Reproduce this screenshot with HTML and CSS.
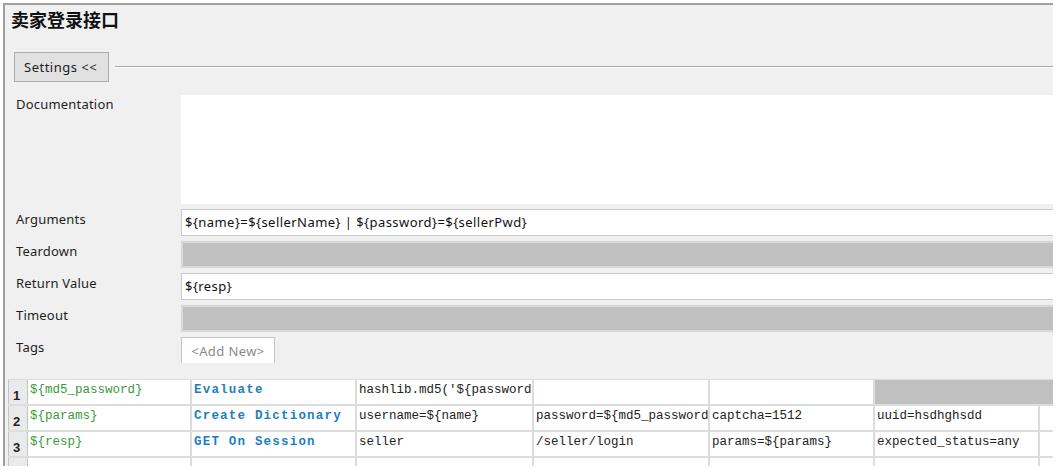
FILE: index.html
```html
<!DOCTYPE html>
<html>
<head>
<meta charset="utf-8">
<link rel="stylesheet" href="styles.css">
</head>
<body>
<div class="panel">
  <div class="title">卖家登录接口</div>
  <div class="settings-row">
    <div class="btn">Settings &lt;&lt;</div>
    <div class="rule"></div>
  </div>
  <div class="form">
    <div class="label">Documentation</div>
    <div class="field doc"></div>
    <div class="label">Arguments</div>
    <div class="field input">${name}=${sellerName} | ${password}=${sellerPwd}</div>
    <div class="label">Teardown</div>
    <div class="field disabled"></div>
    <div class="label">Return Value</div>
    <div class="field input">${resp}</div>
    <div class="label">Timeout</div>
    <div class="field disabled"></div>
    <div class="label">Tags</div>
    <div class="tagcell"><div class="addnew">&lt;Add New&gt;</div></div>
  </div>
  <div class="grid">
    <div class="row">
      <div class="rh">1</div>
      <div class="c c1 var">${md5_password}</div>
      <div class="c c2 kw">Evaluate</div>
      <div class="c c3">hashlib.md5('${password}'.encode()).hexdigest()</div>
      <div class="c c4"></div>
      <div class="c c5"></div>
      <div class="c c6 gray"></div>
      <div class="c c7 gray"></div>
    </div>
    <div class="row">
      <div class="rh">2</div>
      <div class="c c1 var">${params}</div>
      <div class="c c2 kw">Create Dictionary</div>
      <div class="c c3">username=${name}</div>
      <div class="c c4">password=${md5_password}</div>
      <div class="c c5">captcha=1512</div>
      <div class="c c6">uuid=hsdhghsdd</div>
      <div class="c c7"></div>
    </div>
    <div class="row">
      <div class="rh">3</div>
      <div class="c c1 var">${resp}</div>
      <div class="c c2 kw">GET On Session</div>
      <div class="c c3">seller</div>
      <div class="c c4">/seller/login</div>
      <div class="c c5">params=${params}</div>
      <div class="c c6">expected_status=any</div>
      <div class="c c7"></div>
    </div>
    <div class="row">
      <div class="rh">4</div>
      <div class="c c1"></div>
      <div class="c c2"></div>
      <div class="c c3"></div>
      <div class="c c4"></div>
      <div class="c c5"></div>
      <div class="c c6"></div>
      <div class="c c7"></div>
    </div>
  </div>
</div>
</body>
</html>
```
FILE: styles.css
```css
* { box-sizing: border-box; }
html, body { margin: 0; padding: 0; background: #ffffff; }
body { padding: 3px 0 0 3px; }
.panel {
  width: 1050px;
  height: 463px;
  overflow: hidden;
  background: #f0f0f0;
  border-left: 2px solid #a0a0a0;
  border-top: 2px solid #a0a0a0;
  font-family: "Noto Sans", "Open Sans", sans-serif;
  color: #1e1e1e;
}
.title {
  font-family: "Noto Sans CJK SC", sans-serif;
  font-weight: bold;
  font-size: 18px;
  line-height: 24px;
  padding: 2px 0 0 6px;
  height: 47px;
  color: #111;
}
.settings-row {
  display: flex;
  align-items: center;
  padding-left: 9px;
  height: 30px;
}
.btn {
  width: 95px;
  height: 30px;
  background: #e1e1e1;
  border: 1px solid #adadad;
  font-size: 13px;
  letter-spacing: 0.5px;
  display: flex;
  align-items: center;
  padding-left: 9px;
  color: #222;
}
.rule {
  flex: 1;
  margin-left: 6px;
  height: 2px;
  border-top: 1px solid #a8a8a8;
  border-bottom: 1px solid #ffffff;
}
.form {
  display: grid;
  grid-template-columns: 176px 1fr;
  row-gap: 5px;
  margin-top: 13px;
}
.label {
  font-size: 13px;
  letter-spacing: 0.2px;
  padding-left: 11px;
  padding-top: 2px;
  line-height: 16px;
  color: #1e1e1e;
}
.label:first-child { padding-top: 1px; }
.field {
  height: 27px;
  margin-right: -4px;
}
.field.doc {
  height: 109px;
  background: #ffffff;
}
.field.input {
  background: #ffffff;
  border: 1px solid #c9c9c9;
  font-size: 13px;
  letter-spacing: 0.45px;
  line-height: 25px;
  padding-left: 3px;
  color: #111;
  white-space: nowrap;
}
.field.disabled {
  background: #c0c0c0;
  border: 2px solid #d8d8d8;
  outline: 1px solid #ececec;
}
.tagcell { height: 26px; }
.addnew {
  width: 94px;
  height: 26px;
  background: #ffffff;
  border: 1px solid #c4c4c4;
  border-bottom: none;
  color: #8a8a8a;
  font-size: 13px;
  letter-spacing: 0.4px;
  display: flex;
  align-items: center;
  justify-content: center;
}
.grid {
  margin-top: 16px;
  margin-left: 3px;
  font-family: "Liberation Mono", "DejaVu Sans Mono", monospace;
  font-size: 12.5px;
  color: #222;
  border-top: 1px solid #dcdcdc;
}
.row {
  display: flex;
  height: 26px;
  border-bottom: 2px solid #dcdcdc;
}
.rh {
  width: 20px;
  flex: none;
  background: #eaeaea;
  border-right: 1px solid #c4c4c4;
  border-left: 1px solid #c4c4c4;
  font-family: "Liberation Sans", sans-serif;
  font-weight: bold;
  font-size: 13px;
  line-height: 14px;
  color: #222;
  padding: 9px 0 0 4px;
}
.c {
  flex: none;
  background: #ffffff;
  border-right: 2px solid #dcdcdc;
  padding: 3px 0 0 2px;
  white-space: nowrap;
  overflow: hidden;
  line-height: 14px;
}
.c1 { width: 164px; }
.c2 { width: 165px; }
.c3 { width: 177px; }
.c4 { width: 176px; }
.c5 { width: 165px; }
.c6 { width: 165px; }
.c7 { width: 40px; }
.c.gray { background: #c0c0c0; border-right-color: #c0c0c0; }
.var { color: #3a9a3a; }
.kw {
  color: #1a7fc4;
  font-weight: bold;
  letter-spacing: 1.2px;
}
```
